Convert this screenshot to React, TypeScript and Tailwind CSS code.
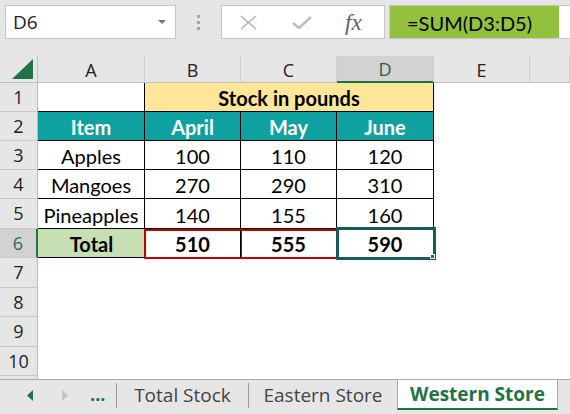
import React from "react";

const cellFont = { fontFamily: "Lato, 'Noto Sans', sans-serif" };
const uiFont = { fontFamily: "'Open Sans', 'Noto Sans', sans-serif" };

function Cell({ children, className = "" }: { children?: React.ReactNode; className?: string }) {
  return (
    <div className={`flex items-center justify-center pt-[2px] text-[20px] text-black ${className}`} style={cellFont}>
      {children}
    </div>
  );
}

function RowHead({ n, active = false, last = false }: { n: number; active?: boolean; last?: boolean }) {
  return (
    <div
      className={`flex items-center justify-center text-[18px] ${
        active
          ? "bg-[#d2d2d2] text-[#217346] border-r-2 border-r-[#217346]"
          : "bg-[#e6e6e6] text-[#222] border-r border-r-[#bdbdbd]"
      } ${last ? "" : "border-b border-b-[#c8c8c8]"}`}
      style={uiFont}
    >
      {n}
    </div>
  );
}

function ColHead({ label, active = false }: { label: string; active?: boolean }) {
  return (
    <div
      className={`flex items-center justify-center pt-[2px] text-[18px] border-r border-r-[#cfcfcf] ${
        active
          ? "bg-[#d2d2d2] text-[#1f5f4a] border-b-2 border-b-[#217346]"
          : "bg-[#e6e6e6] text-[#222] border-b border-b-[#bdbdbd]"
      }`}
      style={uiFont}
    >
      {label}
    </div>
  );
}

const data = [
  { n: 3, item: "Apples", v: [100, 110, 120] },
  { n: 4, item: "Mangoes", v: [270, 290, 310] },
  { n: 5, item: "Pineapples", v: [140, 155, 160] },
];

export default function App() {
  const bd = "border-r border-b border-black";
  return (
    <div className="w-[570px] h-[414px] bg-[#e6e6e6] flex flex-col overflow-hidden">
      {/* formula bar */}
      <div className="h-[56px] flex items-start pt-[5px] shrink-0">
        <div className="ml-[5px] w-[171px] h-[34px] bg-white border border-[#c6c6c6] flex items-center justify-between pl-[7px] pr-[9px]">
          <span className="text-[19px] text-[#222]" style={uiFont}>D6</span>
          <svg width="8" height="4" viewBox="0 0 8 4"><path d="M0 0h8L4 4z" fill="#777" /></svg>
        </div>
        <div className="w-[45px] h-[34px] flex flex-col items-center justify-center gap-[3px]">
          <span className="w-[3px] h-[3px] bg-[#a6a6a6]" />
          <span className="w-[3px] h-[3px] bg-[#a6a6a6]" />
          <span className="w-[3px] h-[3px] bg-[#a6a6a6]" />
        </div>
        <div className="w-[164px] h-[34px] bg-white border border-[#c6c6c6] flex items-center">
          <svg className="ml-[18px]" width="17" height="15" viewBox="0 0 17 15">
            <path d="M1 1L16 14M16 1L1 14" stroke="#b3b3b3" strokeWidth="1.6" fill="none" />
          </svg>
          <svg className="ml-[35px]" width="20" height="13" viewBox="0 0 20 13">
            <path d="M1 7l6 5L19 1" stroke="#bdbdbd" strokeWidth="2.6" fill="none" />
          </svg>
          <span className="ml-[33px] text-[23px] italic text-[#5f5f5f] leading-none" style={{ fontFamily: "'Liberation Serif', serif" }}>
            fx
          </span>
        </div>
        <div className="ml-[4px] flex-1 h-[34px] bg-white border-y border-l border-[#c6c6c6] flex">
          <div className="w-[169px] h-full bg-[#92c13e] flex items-center pl-[17px] pt-[1px] text-[20px] text-black" style={cellFont}>
            =SUM(D3:D5)
          </div>
        </div>
      </div>

      {/* sheet */}
      <div className="relative h-[323px] shrink-0 grid grid-cols-[38px_107px_96px_96px_97px_96px_1fr] grid-rows-[27px_29px_29px_29px_29px_30px_29px_30px_29px_30px_29px_1fr] bg-white">
        <div className="bg-[#e6e6e6] border-r border-r-[#bdbdbd] border-b border-b-[#bdbdbd] flex items-end justify-end pr-[4px] pb-[3px]">
          <svg width="21" height="20" viewBox="0 0 21 20"><path d="M21 0V20H0z" fill="#217346" /></svg>
        </div>
        <ColHead label="A" />
        <ColHead label="B" />
        <ColHead label="C" />
        <ColHead label="D" active />
        <ColHead label="E" />
        <ColHead label="" />

        {/* row 1 */}
        <RowHead n={1} />
        <Cell className={`bg-white ${bd}`} />
        <Cell className={`col-span-3 bg-[#ffe699] font-bold ${bd}`}>Stock in pounds</Cell>
        <Cell className="bg-white" />
        <Cell className="bg-white" />

        {/* row 2 */}
        <RowHead n={2} />
        {["Item", "April", "May", "June"].map((t) => (
          <Cell key={t} className={`bg-[#0fa0a0] text-white font-bold ${bd}`}>
            <span className="text-white">{t}</span>
          </Cell>
        ))}
        <Cell className="bg-white" />
        <Cell className="bg-white" />

        {data.map((r) => (
          <React.Fragment key={r.n}>
            <RowHead n={r.n} />
            <Cell className={`bg-white ${bd}`}>{r.item}</Cell>
            {r.v.map((x, i) => (
              <Cell key={i} className={`bg-white ${bd}`}>{x}</Cell>
            ))}
            <Cell className="bg-white" />
            <Cell className="bg-white" />
          </React.Fragment>
        ))}

        {/* row 6 */}
        <RowHead n={6} active />
        <Cell className="bg-[#c6e0b4] font-bold border-b border-black">Total</Cell>
        <Cell className={`bg-white font-bold ${bd}`}>510</Cell>
        <Cell className={`bg-white font-bold ${bd}`}>555</Cell>
        <Cell className={`bg-white font-bold ${bd}`}>590</Cell>
        <Cell className="bg-white" />
        <Cell className="bg-white" />

        {[7, 8, 9, 10].map((n) => (
          <React.Fragment key={n}>
            <RowHead n={n} />
            <div className="col-span-6 bg-white" />
          </React.Fragment>
        ))}
        <div className="bg-[#e6e6e6] border-r border-r-[#bdbdbd]" />
        <div className="col-span-6 bg-white" />

        {/* reference highlight B6:C6 */}
        <div className="absolute left-[144px] top-[173px] w-[194px] h-[30px] border-2 border-[#c00000] pointer-events-none">
          <div className="absolute left-[95px] top-0 bottom-0 w-px bg-[#c00000]" />
        </div>
        {/* active cell D6 */}
        <div className="absolute left-[336px] top-[171px] w-[100px] h-[33px] border-[3px] border-[#1b5a56] pointer-events-none">
          <div className="absolute right-[-2px] bottom-[-2px] w-[5px] h-[5px] bg-[#217346] border border-white" />
        </div>
      </div>

      {/* sheet tabs */}
      <div className="h-[35px] shrink-0 border-t border-[#ababab] flex items-start">
        <div className="w-[116px] h-[30px] flex items-center">
          <svg className="ml-[27px]" width="6" height="11" viewBox="0 0 6 11"><path d="M6 0V11L0 5.5z" fill="#217346" /></svg>
          <svg className="ml-[29px]" width="6" height="11" viewBox="0 0 6 11"><path d="M0 0V11L6 5.5z" fill="#c3c3c3" /></svg>
          <span className="ml-[22px] text-[18px] font-bold text-[#217346] leading-none pb-[2px]" style={uiFont}>...</span>
        </div>
        <div className="w-px h-[25px] mt-[3px] bg-[#9c9c9c]" />
        <div className="w-[131px] h-[30px] flex items-center justify-center text-[19px] text-[#444]" style={uiFont}>
          Total Stock
        </div>
        <div className="w-px h-[25px] mt-[3px] bg-[#9c9c9c]" />
        <div className="w-[148px] h-[30px] flex items-center justify-center text-[19px] text-[#444]" style={uiFont}>
          Eastern Store
        </div>
        <div className="w-[161px] h-[30px] bg-white border-l border-r border-[#ababab] border-b-2 border-b-[#217346] flex items-center justify-center text-[19px] font-bold text-[#217346]" style={uiFont}>
          Western Store
        </div>
      </div>
    </div>
  );
}
